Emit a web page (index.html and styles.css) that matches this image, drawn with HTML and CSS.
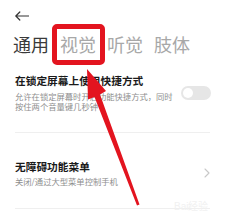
FILE: index.html
```html
<!DOCTYPE html>
<html lang="zh-CN">
<head>
<meta charset="utf-8">
<title>无障碍</title>
<link rel="stylesheet" href="styles.css">
</head>
<body>
<div class="screen">
  <header class="top">
    <svg class="back" width="14" height="10" viewBox="0 0 14 10"><path d="M0.8 5 H13.5 M4.8 1 L0.8 5 L4.8 9" fill="none" stroke="#333" stroke-width="1.2" stroke-linecap="round" stroke-linejoin="round"/></svg>
  </header>
  <nav class="tabs">
    <span class="tab tab-active">通用</span>
    <span class="tab">视觉</span>
    <span class="tab">听觉</span>
    <span class="tab">肢体</span>
  </nav>
  <section class="item item-first">
    <div class="text">
      <div class="title">在锁定屏幕上使用快捷方式</div>
      <div class="desc">允许在锁定屏幕时开启功能快捷方式，同时按住两个音量键几秒钟</div>
    </div>
    <span class="switch"><span class="knob"></span></span>
  </section>
  <div class="divider"></div>
  <section class="item item-second">
    <div class="text">
      <div class="title">无障碍功能菜单</div>
      <div class="desc desc-one">关闭/通过大型菜单控制手机</div>
    </div>
    <svg class="chevron" width="6" height="10" viewBox="0 0 6 10"><path d="M1 1 L5 5 L1 9" fill="none" stroke="#c8c8c8" stroke-width="1.1" stroke-linecap="round" stroke-linejoin="round"/></svg>
  </section>
  <div class="divider"></div>
  <span class="watermark">Bai经验</span>
  <svg class="annot" width="225" height="224" viewBox="0 0 225 224">
    <rect x="54.5" y="26.5" width="48" height="36" rx="2.5" fill="none" stroke="#e3141f" stroke-width="5"/>
    <polygon points="87,69 106,91 100,94.5 139.5,204.5 137,205.5 94.5,97 88,99.5" fill="#e3141f"/>
  </svg>
</div>
</body>
</html>
```

FILE: styles.css
```css
html, body {
  margin: 0;
  padding: 0;
  background: #ffffff;
}
.screen {
  position: relative;
  width: 225px;
  height: 224px;
  overflow: hidden;
  font-family: "Noto Sans CJK SC", "Noto Sans", sans-serif;
  background: #ffffff;
}
.top {
  height: 34px;
  padding-left: 15px;
  box-sizing: border-box;
  padding-top: 11px;
}
.back {
  display: block;
}
.tabs {
  display: flex;
  padding-left: 13px;
  font-size: 18px;
  line-height: 20px;
  height: 20px;
}
.tab {
  margin-right: 11px;
  color: #a8a8a8;
}
.tab-active {
  color: #3a3a3a;
}
.item {
  display: flex;
  align-items: center;
  justify-content: space-between;
  padding: 0 14px 0 15px;
}
.item-first {
  padding-top: 20px;
  padding-bottom: 21px;
}
.item-second {
  padding-top: 27px;
  padding-bottom: 22px;
}
.text {
  width: 162px;
}
.title {
  font-size: 10.7px;
  line-height: 14px;
  font-weight: 700;
  color: #1a1a1a;
}
.desc {
  margin-top: 3px;
  font-size: 8.3px;
  line-height: 10px;
  color: #8e8e8e;
}
.desc-one {
  margin-top: 1.5px;
}
.switch {
  position: relative;
  display: block;
  width: 30px;
  height: 14px;
  border-radius: 7px;
  background: #e6e6e6;
}
.knob {
  position: absolute;
  left: 2px;
  top: 2px;
  width: 10px;
  height: 10px;
  border-radius: 50%;
  background: #ffffff;
}
.chevron {
  display: block;
  margin-right: 1px;
}
.divider {
  height: 1px;
  margin: 0 15px;
  background: #efefef;
}
.watermark {
  position: absolute;
  left: 174px;
  top: 198px;
  font-family: "Liberation Sans", sans-serif;
  font-size: 10px;
  color: #f1f1f1;
}
.annot {
  position: absolute;
  left: 0;
  top: 0;
}
```
